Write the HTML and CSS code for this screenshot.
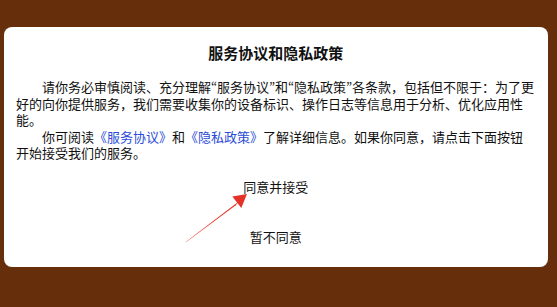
FILE: index.html
```html
<!DOCTYPE html>
<html lang="zh-CN">
<head>
    <meta charset="UTF-8">
    <meta name="viewport" content="width=device-width, initial-scale=1.0">
    <title>服务协议和隐私政策</title>
    <link rel="stylesheet" href="styles.css">
</head>
<body>

    <div class="dialog">
        <h1 class="dialog-title">服务协议和隐私政策</h1>

        <div class="dialog-content">
            <p>请你务必审慎阅读、充分理解<span class="quote">“</span>服务协议<span class="quote">”</span>和<span class="quote">“</span>隐私政策<span class="quote">”</span>各条款，包括但不限于：为了更好的向你提供服务，我们需要收集你的设备标识、操作日志等信息用于分析、优化应用性<br>能。</p>
            <p>你可阅读<a href="#">《服务协议》</a>和<a href="#">《隐私政策》</a>了解详细信息。如果你同意，请点击下面按钮开始接受我们的服务。</p>
        </div>

        <div class="dialog-actions">
            <button class="btn-agree">同意并接受</button>
            <button class="btn-refuse">暂不同意</button>
        </div>

        <!-- flecha roja de la captura -->
        <svg class="arrow" width="75" height="65" viewBox="0 0 75 65">
            <polygon points="5.6,57.6 6.4,56.4 58.7,16.5 55.8,20.2" fill="#e53228"/>
            <polygon points="67,9 52.3,11.5 61.3,22.9" fill="#e53228"/>
        </svg>
    </div>

</body>
</html>
```

FILE: styles.css
```css
body {
    margin: 0;
    padding: 27px 9px 0 4px;
    height: 307px;
    box-sizing: border-box;
    background-color: #672e0c;
    font-family: "Noto Sans CJK SC", sans-serif;
    color: #111;
}

.dialog {
    position: relative;
    height: 240px;
    box-sizing: border-box;
    padding: 16px 12.5px 0 12px;
    background-color: white;
    border-radius: 8px;
}

.dialog-title {
    margin: 0;
    font-size: 15px;
    line-height: 20px;
    font-weight: bold;
    text-align: center;
}

.dialog-content {
    margin-top: 16px;
    font-size: 13px;
    line-height: 16.6px;
}

.dialog-content p {
    margin: 0;
    text-indent: 2em;
}

.dialog-content a {
    color: #2a4bd7;
    text-decoration: none;
}

/* comillas estrechas como en la captura */
.quote {
    display: inline-block;
    width: 6px;
    text-indent: 0;
    font-family: "Noto Sans CJK JP", sans-serif;
}

.dialog-actions {
    display: flex;
    flex-direction: column;
    align-items: center;
}

.dialog-actions button {
    font-family: "Noto Sans CJK SC", sans-serif;
    font-size: 13px;
    color: #111;
    background: none;
    border: none;
    padding: 0;
    height: 50px;
    width: 120px;
}

.arrow {
    position: absolute;
    left: 176px;
    top: 158px;
}
```
